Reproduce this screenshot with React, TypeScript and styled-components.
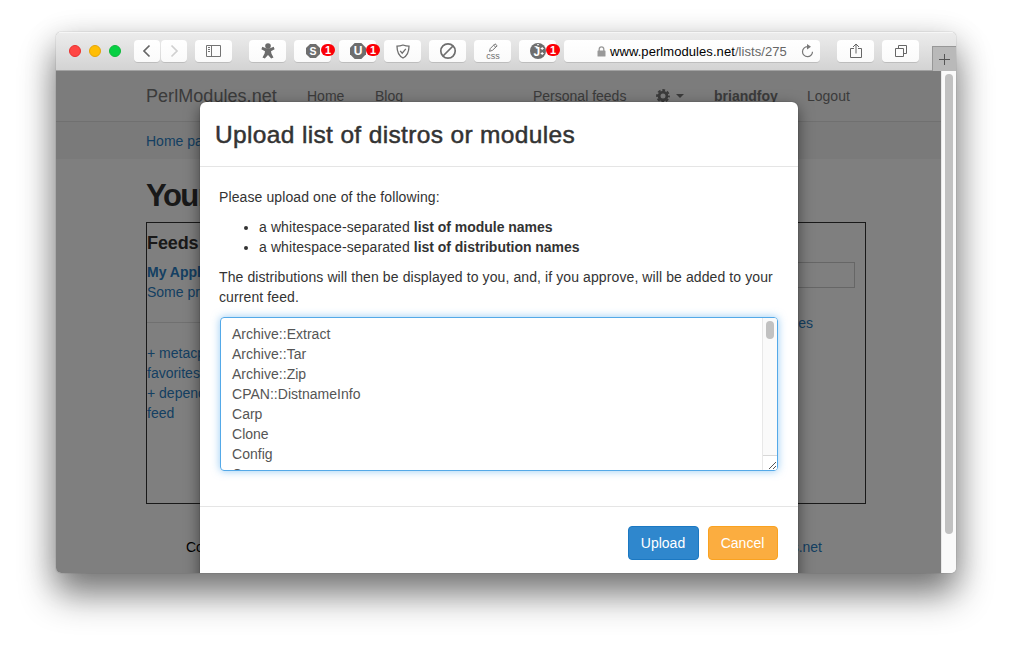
import React from 'react';
import styled, { createGlobalStyle } from 'styled-components';

const GlobalStyle = createGlobalStyle`
  * { box-sizing: border-box; }
  body {
    margin: 0;
    background: #fff;
    font-family: "Liberation Sans", Arial, sans-serif;
    font-size: 14px;
    line-height: 20px;
    color: #333;
  }
`;

const Desktop = styled.div`
  width: 1012px;
  height: 653px;
  padding: 32px 56px;
  overflow: hidden;
`;

const Window = styled.div`
  width: 900px;
  height: 541px;
  border-radius: 5px;
  box-shadow: 0 0 1px rgba(0, 0, 0, 0.5), 0 22px 36px rgba(0, 0, 0, 0.46), 0 8px 32px rgba(0, 0, 0, 0.2);
`;

const Clip = styled.div`
  height: 100%;
  display: flex;
  flex-direction: column;
  border-radius: 5px;
  overflow: hidden;
`;

const Toolbar = styled.div`
  flex: none;
  height: 39px;
  display: flex;
  align-items: flex-start;
  padding: 7px 0 0 13px;
  background: linear-gradient(#ececec, #d3d3d3);
  border-top: 1px solid #f6f6f6;
  border-bottom: 1px solid #a2a2a2;
`;

const Lights = styled.div`
  display: flex;
  gap: 8px;
  padding-top: 5px;
  margin-right: 13px;
`;

const Light = styled.i<{ $fill: string; $edge: string }>`
  width: 12px;
  height: 12px;
  border-radius: 50%;
  background: ${(p) => p.$fill};
  border: 1px solid ${(p) => p.$edge};
`;

const ToolButton = styled.div<{ $width?: number; $gap?: number }>`
  flex: none;
  position: relative;
  width: ${(p) => p.$width ?? 37}px;
  height: 22px;
  margin-right: ${(p) => p.$gap ?? 8}px;
  display: flex;
  align-items: center;
  justify-content: center;
  border-radius: 4px;
  background: linear-gradient(#fff, #fafafa);
  box-shadow: 0 1px 0 rgba(0, 0, 0, 0.12);
  svg { display: block; }
`;

const Badge = styled.span`
  position: absolute;
  left: 27px;
  top: 4px;
  width: 14px;
  height: 12px;
  border-radius: 6px;
  background: #fb0007;
  color: #fff;
  font-size: 11px;
  font-weight: bold;
  line-height: 13px;
  text-align: center;
`;

const Address = styled(ToolButton)`
  justify-content: flex-start;
  padding: 0 6px 0 33px;
  font-size: 13px;
  color: #000;
  span { margin-left: 4px; padding-top: 1px; width: 191px; letter-spacing: 0.07px; white-space: nowrap; }
  em { font-style: normal; color: #666; }
`;

const NewTab = styled.div`
  width: 24px;
  height: 25px;
  margin: 6px 0 0 5px;
  display: flex;
  align-items: center;
  justify-content: center;
  background: #b9b9b9;
  border: solid #979797;
  border-width: 1px 0 0 1px;
`;

const Viewport = styled.div`
  position: relative;
  flex: 1;
  display: flex;
  min-height: 0;
`;

const Page = styled.div`
  position: relative;
  width: 885px;
  height: 100%;
  overflow: hidden;
  background: #fff;
`;

const Scrollbar = styled.div`
  width: 15px;
  height: 100%;
  padding: 3px;
  background: #fafafa;
  border-left: 1px solid #e8e8e8;
`;

const Thumb = styled.div<{ $height: number; $width: number }>`
  width: ${(p) => p.$width}px;
  height: ${(p) => p.$height}px;
  border-radius: 4px;
  background: #c1c1c1;
`;

const Navbar = styled.div`
  height: 51px;
  display: flex;
  align-items: flex-start;
  padding: 15px 0 0 90px;
  background: #f8f8f8;
  border-bottom: 1px solid #e1e1e1;
  color: #777;
  white-space: nowrap;
`;

const Brand = styled.div`
  width: 161px;
  font-size: 18px;
  letter-spacing: 0.05px;
`;

const NavItem = styled.div<{ $width?: number; $bold?: boolean }>`
  width: ${(p) => (p.$width ? `${p.$width}px` : 'auto')};
  height: 20px;
  font-weight: ${(p) => (p.$bold ? 'bold' : 'normal')};
  display: flex;
  align-items: center;
  gap: 6px;
`;

const Link = styled.span`
  color: #2a7fc4;
`;

const Breadcrumb = styled.div`
  height: 37px;
  padding: 9px 90px;
  background: #f5f5f5;
`;

const Content = styled.div`
  padding: 20px 75px 0 90px;
`;

const Heading = styled.h1`
  margin: 0;
  height: 43px;
  font-size: 31px;
  line-height: 34px;
  font-weight: bold;
  letter-spacing: -1.5px;
  color: #333;
`;

const Panel = styled.div`
  width: 720px;
  height: 282px;
  display: flex;
  justify-content: space-between;
  border: 1px solid #333;
`;

const Feeds = styled.div`
  width: 180px;
  padding-top: 9px;
  h2 { margin: 0 0 8px; font-size: 18px; line-height: 22px; letter-spacing: -0.1px; }
  strong { color: #2a7fc4; }
`;

const Line = styled.div`
  white-space: nowrap;
`;

const Rule = styled.hr`
  margin: 20px 0;
  border: 0;
  border-top: 1px solid #e1e1e1;
`;

const SearchColumn = styled.div`
  width: 190px;
  padding: 39px 10px 0 0;
`;

const SearchField = styled.div`
  height: 26px;
  border: 1px solid #ccc;
`;

const SearchLink = styled.div`
  width: 138px;
  margin-top: 25px;
  text-align: right;
`;

const Footer = styled.div`
  width: 636px;
  margin: 33px 0 0 40px;
  display: flex;
  justify-content: space-between;
  color: #000;
`;

const Backdrop = styled.div`
  position: absolute;
  inset: 0;
  background: rgba(0, 0, 0, 0.5);
`;

const Modal = styled.div`
  position: absolute;
  left: 144px;
  top: 31px;
  width: 598px;
  height: 500px;
  background: #fff;
  border-radius: 6px;
  box-shadow: 0 0 1px rgba(0, 0, 0, 0.6), 0 5px 15px rgba(0, 0, 0, 0.5);
`;

const ModalHeader = styled.div`
  height: 65px;
  padding: 17px 15px 0;
  border-bottom: 1px solid #e5e5e5;
  font-size: 24.5px;
  line-height: 32px;
  letter-spacing: 0.35px;
  -webkit-text-stroke: 0.5px #333;
  white-space: nowrap;
`;

const ModalBody = styled.div`
  height: 339px;
  padding: 20px 20px 0 19px;
  letter-spacing: 0.1px;
  p { margin: 0 0 10px; white-space: nowrap; }
  ul { margin: 0 0 10px; padding-left: 40px; }
  b { letter-spacing: -0.03px; }
`;

const TextBox = styled.div`
  height: 154px;
  margin: 0 0 0 1px;
  display: flex;
  border: 1px solid #54a9e8;
  border-radius: 4px;
  overflow: hidden;
  color: #555;
  letter-spacing: 0.02px;
  box-shadow: 0 0 8px rgba(82, 168, 236, 0.6);
`;

const TextLines = styled.div`
  flex: 1;
  padding: 6px 11px;
  height: 152px;
  overflow: hidden;
`;

const TextTrack = styled.div`
  width: 15px;
  display: flex;
  flex-direction: column;
  justify-content: space-between;
  border-left: 1px solid #e8e8e8;
  background: #fafafa;
`;

const TrackThumb = styled.div`
  padding: 3px 0 0 3px;
`;

const Grip = styled.div`
  height: 15px;
  background: #fff;
  border-top: 1px solid #d8d8d8;
  svg { display: block; }
`;

const ModalFooter = styled.div`
  padding: 19px 20px;
  display: flex;
  justify-content: flex-end;
  gap: 9px;
  border-top: 1px solid #e5e5e5;
`;

const Button = styled.button<{ $bg: string; $edge: string; $width: number }>`
  width: ${(p) => p.$width}px;
  height: 34px;
  padding: 0 1px 0 0;
  font: inherit;
  color: #fff;
  background: ${(p) => p.$bg};
  border: 1px solid ${(p) => p.$edge};
  border-radius: 4px;
`;

const Chevron = ({ color, d }: { color: string; d: string }) => (
  <svg width="10" height="14" viewBox="0 0 10 14" fill="none" stroke={color} strokeWidth="1.7">
    <path d={d} />
  </svg>
);

const SidebarIcon = () => (
  <svg width="15" height="12" viewBox="0 0 15 12" fill="none" stroke="#737373">
    <path d="M.5.5h14v11H.5zM5.5.5v11M2 2.500h2M2 4.500h2M2 6.500h2" />
  </svg>
);

const PersonIcon = () => (
  <svg width="14" height="16" viewBox="0 0 14 16" fill="#6b6b6b">
    <circle cx="7" cy="3" r="2.8" />
    <path d="M1.300 3.800 5 5.300h4l3.700-1.500.9 2.400L10 8.200l.4 2.300 2.100 4.100-2.300.9L7 12l-3.200 3.500-2.300-.9 2.100-4.100.4-2.300L.4 6.200z" />
  </svg>
);

const OctagonIcon = ({ letter, size }: { letter: string; size: number }) => (
  <svg width={size} height={size} viewBox="0 0 16 16">
    <path d="M4.700 0h6.600L16 4.700v6.600L11.300 16H4.700L0 11.300V4.700z" fill="#6e6e6e" />
    <text x="8" y="12.300" textAnchor="middle" fill="#fff" fontSize="12" fontWeight="bold" fontFamily="Liberation Sans">
      {letter}
    </text>
  </svg>
);

const ShieldIcon = () => (
  <svg width="14" height="15" viewBox="0 0 14 15" fill="none" stroke="#6e6e6e" strokeWidth="1.3">
    <path d="M7 1C5 1.800 3 2.200 1 2.200c0 5.500 1.500 9.500 6 11.800 4.500-2.300 6-6.300 6-11.800C11 2.200 9 1.800 7 1z" />
    <path d="m4.200 6.900 2 2.300 3.600-4.300" />
  </svg>
);

const BlockIcon = () => (
  <svg width="18" height="18" viewBox="0 0 18 18" fill="none" stroke="#6e6e6e" strokeWidth="1.700">
    <circle cx="9" cy="9" r="7.200" />
    <path d="M4 14 14 4" />
  </svg>
);

const CssIcon = () => (
  <svg width="16" height="16" viewBox="0 0 16 16" fill="none" stroke="#777">
    <path d="m4.500 8.300.8-2.800L10 .8l2.200 2L7.400 7.400zM8.600 2.200l2.200 2" />
    <text x="8" y="15.500" textAnchor="middle" fill="#6e6e6e" stroke="none" fontSize="9" fontFamily="Liberation Sans">css</text>
  </svg>
);

const ScriptIcon = () => (
  <svg width="16" height="16" viewBox="0 0 16 16">
    <circle cx="8" cy="8" r="8" fill="#6e6e6e" />
    <text x="3.500" y="12.500" fill="#fff" fontSize="12" fontWeight="bold" fontFamily="Liberation Sans">J</text>
    <path d="M4.500 3.700h3M7 1.700h2M10.700 5.500h3M12.200 4v3M10.700 10.500h3M12.200 9v3" stroke="#fff" />
  </svg>
);

const LockIcon = () => (
  <svg width="9" height="11" viewBox="0 0 9 11">
    <path d="M2.200 5V3.200a2.300 2.300 0 0 1 4.600 0V5" fill="none" stroke="#999" strokeWidth="1.300" />
    <rect x=".5" y="4.500" width="8" height="6" rx=".6" fill="#999" />
  </svg>
);

const ReloadIcon = () => (
  <svg width="13" height="14" viewBox="0 0 13 14">
    <path d="M6.500 2.700A5 5 0 1 0 11.500 7.800" fill="none" stroke="#777" strokeWidth="1.200" />
    <path d="M6 0v5.400l4-2.700z" fill="#777" />
  </svg>
);

const ShareIcon = () => (
  <svg width="12" height="16" viewBox="0 0 12 16" fill="none" stroke="#666">
    <path d="M4 5.500H.5v9h11v-9H8M6 10.500V1M3 4l3-3 3 3" />
  </svg>
);

const TabsIcon = () => (
  <svg width="12" height="12" viewBox="0 0 12 12" fill="none" stroke="#666">
    <path d="M.5 3.500h8v8h-8zM3.500 3.500v-3h8v8h-3" />
  </svg>
);

const GearIcon = () => (
  <svg width="14" height="14" viewBox="0 0 14 14" fill="none" stroke="#777">
    <circle cx="7" cy="7" r="3.900" strokeWidth="2.800" />
    <circle cx="7" cy="7" r="5.900" strokeWidth="2" strokeDasharray="2.800 1.834" strokeDashoffset="1.400" />
  </svg>
);

const modules = ['Archive::Extract', 'Archive::Tar', 'Archive::Zip', 'CPAN::DistnameInfo', 'Carp', 'Clone', 'Config', 'Common'];

export default function App() {
  return (
    <Desktop>
      <GlobalStyle />
      <Window>
        <Clip>
          <Toolbar>
            <Lights>
              <Light $fill="#ff4644" $edge="#e9302f" />
              <Light $fill="#ffbe05" $edge="#e5a507" />
              <Light $fill="#06d043" $edge="#0fb83c" />
            </Lights>
            <ToolButton $width={26} $gap={1}><Chevron color="#666" d="M7.500 1.500 2 7l5.500 5.500" /></ToolButton>
            <ToolButton $width={26}><Chevron color="#d0d0d0" d="M2.500 1.500 8 7l-5.500 5.500" /></ToolButton>
            <ToolButton $gap={17}><SidebarIcon /></ToolButton>
            <ToolButton><PersonIcon /></ToolButton>
            <ToolButton><OctagonIcon letter="S" size={14} /><Badge>1</Badge></ToolButton>
            <ToolButton><OctagonIcon letter="U" size={16} /><Badge>1</Badge></ToolButton>
            <ToolButton><ShieldIcon /></ToolButton>
            <ToolButton><BlockIcon /></ToolButton>
            <ToolButton><CssIcon /></ToolButton>
            <ToolButton><ScriptIcon /><Badge>1</Badge></ToolButton>
            <Address $width={256} $gap={17}>
              <LockIcon />
              <span>www.perlmodules.net<em>/lists/275</em></span>
              <ReloadIcon />
            </Address>
            <ToolButton><ShareIcon /></ToolButton>
            <ToolButton><TabsIcon /></ToolButton>
            <NewTab>
              <svg width="11" height="11" viewBox="0 0 11 11" stroke="#555"><path d="M0 5.500h11M5.500 0v11" /></svg>
            </NewTab>
          </Toolbar>
          <Viewport>
            <Page>
              <Navbar>
                <Brand>PerlModules.net</Brand>
                <NavItem $width={68}>Home</NavItem>
                <NavItem $width={158}>Blog</NavItem>
                <NavItem $width={123}>Personal feeds</NavItem>
                <NavItem $width={58}>
                  <GearIcon />
                  <svg width="8" height="4" viewBox="0 0 8 4" fill="#777"><path d="M0 0h8L4 4z" /></svg>
                </NavItem>
                <NavItem $width={93} $bold>briandfoy</NavItem>
                <NavItem>Logout</NavItem>
              </Navbar>
              <Breadcrumb><Link>Home page</Link></Breadcrumb>
              <Content>
                <Heading>Your feeds</Heading>
                <Panel>
                  <Feeds>
                    <h2>Feeds</h2>
                    <Line><strong>My Applications</strong></Line>
                    <Line><Link>Some project</Link></Line>
                    <Rule />
                    <Line><Link>+ metacpan</Link></Line>
                    <Line><Link>favorites</Link></Line>
                    <Line><Link>+ dependency</Link></Line>
                    <Line><Link>feed</Link></Line>
                  </Feeds>
                  <SearchColumn>
                    <SearchField />
                    <SearchLink><Link>modules</Link></SearchLink>
                  </SearchColumn>
                </Panel>
                <Footer><span>Contact</span><Link>perlmodules.net</Link></Footer>
              </Content>
              <Backdrop />
              <Modal>
                <ModalHeader>Upload list of distros or modules</ModalHeader>
                <ModalBody>
                  <p>Please upload one of the following:</p>
                  <ul>
                    <li>a whitespace-separated <b>list of module names</b></li>
                    <li>a whitespace-separated <b>list of distribution names</b></li>
                  </ul>
                  <p>The distributions will then be displayed to you, and, if you approve, will be added to your<br />current feed.</p>
                  <TextBox>
                    <TextLines>{modules.map((m) => <div key={m}>{m}</div>)}</TextLines>
                    <TextTrack>
                      <TrackThumb><Thumb $width={8} $height={18} /></TrackThumb>
                      <Grip>
                        <svg width="14" height="14" viewBox="0 0 14 14" stroke="#555"><path d="m6 13 7-7M10 13l3-3" /></svg>
                      </Grip>
                    </TextTrack>
                  </TextBox>
                </ModalBody>
                <ModalFooter>
                  <Button $width={71} $bg="#2f87cd" $edge="#1b78c2">Upload</Button>
                  <Button $width={70} $bg="#fbad40" $edge="#faa220">Cancel</Button>
                </ModalFooter>
              </Modal>
            </Page>
            <Scrollbar><Thumb $width={8} $height={460} /></Scrollbar>
          </Viewport>
        </Clip>
      </Window>
    </Desktop>
  );
}
